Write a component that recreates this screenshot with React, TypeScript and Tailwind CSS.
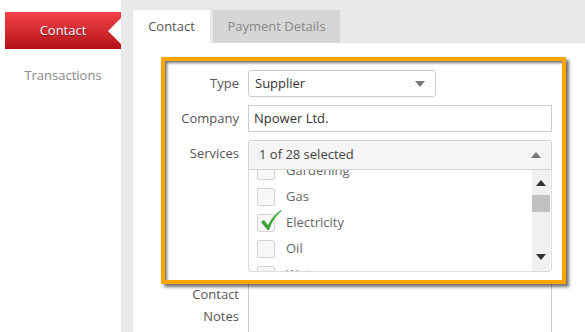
import React from "react";

function Tri({ dir, className }: { dir: "up" | "down"; className?: string }) {
  return (
    <svg width="10" height="6" viewBox="0 0 10 6" className={className}>
      {dir === "down" ? <path d="M0 0 H10 L5 6 Z" fill="currentColor" /> : <path d="M0 6 H10 L5 0 Z" fill="currentColor" />}
    </svg>
  );
}

function Item({ label, checked }: { label: string; checked?: boolean }) {
  return (
    <div className="h-[26px] flex items-center pl-[8px] shrink-0">
      <div className="relative w-[18px] h-[18px] border border-[#d4d4d4] bg-[#f7f7f7] rounded-[2px] shrink-0">
        {checked && (
          <svg className="absolute left-[2px] top-[-6px]" width="22" height="22" viewBox="0 0 22 22">
            <path d="M1 13 L4 11 L8 16 C11 10 15 5 21 1 L21.6 2 C16 6.5 12 12.5 9 21 L7.5 21 Z" fill="#3ca63c" />
          </svg>
        )}
      </div>
      <span className="ml-[11px] text-[13px] text-[#666]">{label}</span>
    </div>
  );
}

export default function App() {
  return (
    <div className="w-[585px] h-[332px] flex overflow-hidden bg-white font-['Open_Sans',sans-serif] text-[13px]">
      <aside className="w-[121px] shrink-0 bg-white pt-[12px] pl-[5px]">
        <div className="relative h-[37px] flex items-center justify-center bg-gradient-to-b from-[#f3414a] to-[#b30f17] text-white text-[13px] [text-shadow:0_1px_1px_rgba(0,0,0,0.45)]">
          Contact
          <svg className="absolute right-0 top-0" width="13" height="37" viewBox="0 0 13 37">
            <path d="M0 19 L13 6 L13 32 Z" fill="#ffffff" />
          </svg>
        </div>
        <div className="mt-[17px] text-center text-[#888] leading-[18px]">Transactions</div>
      </aside>
      <main className="flex-1 bg-[#e9e9e9] pt-[10px] pl-[12px] flex flex-col">
        <div className="h-[33px] flex gap-[3px] shrink-0">
          <div className="w-[77px] bg-white flex items-center justify-center text-[#555]">Contact</div>
          <div className="w-[127px] bg-[#d6d6d6] flex items-center justify-center text-[#888]">Payment Details</div>
        </div>
        <div className="relative flex-1 bg-white pt-[27px] pl-[28px]">
          <div className="flex flex-col gap-[8px]">
            <div className="flex items-center gap-[9px]">
              <div className="w-[78px] text-right text-[#555]">Type</div>
              <div className="w-[188px] h-[27px] border border-[#ccc] rounded-[3px] flex items-center justify-between pl-[6px] pr-[10px] text-[#333]">
                <span>Supplier</span>
                <Tri dir="down" className="text-[#777]" />
              </div>
            </div>
            <div className="flex items-center gap-[9px]">
              <div className="w-[78px] text-right text-[#555]">Company</div>
              <div className="w-[304px] h-[27px] border border-[#ccc] flex items-center pl-[5px] text-[#333]">Npower Ltd.</div>
            </div>
            <div className="flex items-start gap-[9px]">
              <div className="w-[78px] text-right text-[#555] pt-[4px]">Services</div>
              <div className="w-[304px] flex flex-col">
                <div className="h-[30px] border border-[#d4d4d4] rounded-t-[3px] bg-[#f5f5f5] flex items-center justify-between pl-[10px] pr-[10px] text-[#444]">
                  <span>1 of 28 selected</span>
                  <Tri dir="up" className="text-[#777]" />
                </div>
                <div className="h-[102px] border-x border-b border-[#ddd] rounded-b-[3px] bg-white flex overflow-hidden">
                  <div className="flex-1 flex flex-col mt-[-12px]">
                    <Item label="Gardening" />
                    <Item label="Gas" />
                    <Item label="Electricity" checked />
                    <Item label="Oil" />
                    <Item label="Water" />
                  </div>
                  <div className="w-[18px] bg-[#f0f0f0] flex flex-col items-center pt-[10px] mr-[1px]">
                    <Tri dir="up" className="text-[#333]" />
                    <div className="mt-[9px] w-[18px] h-[17px] bg-[#c1c1c1]" />
                    <div className="mt-[42px]"><Tri dir="down" className="text-[#333]" /></div>
                  </div>
                </div>
              </div>
            </div>
            <div className="flex items-start gap-[9px]">
              <div className="w-[78px] text-right text-[#555] pt-[3px] leading-[22px]">Contact Notes</div>
              <div className="w-[304px] h-[80px] border border-[#ccc]" />
            </div>
          </div>
          <div className="absolute left-[28px] top-[14px] w-[405px] h-[227px] border-4 border-[#ffa500] shadow-[3px_3px_3px_rgba(0,0,0,0.55),inset_2px_2px_3px_rgba(0,0,0,0.55)] pointer-events-none" />
        </div>
      </main>
    </div>
  );
}
